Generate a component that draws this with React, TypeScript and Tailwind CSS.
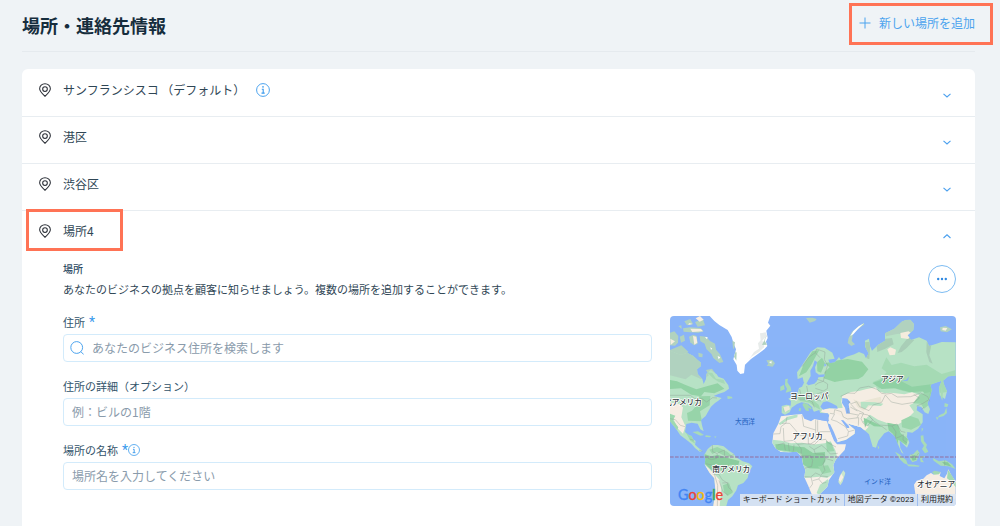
import type { ReactNode } from 'react'
import { clsx } from 'clsx'

const places = [
  { id: 'sf', name: 'サンフランシスコ （デフォルト）', isDefault: true },
  { id: 'minato', name: '港区' },
  { id: 'shibuya', name: '渋谷区' },
  { id: 'place4', name: '場所4', open: true },
]

function PinIcon() {
  return (
    <svg className="h-[14px] w-[14px] shrink-0" viewBox="0 0 12 12" fill="none" stroke="#2c3038" strokeWidth="0.9" aria-hidden="true">
      <path d="M6 11.4C4.1 9.4 1.4 7.4 1.4 5A4.6 4.4 0 0 1 10.6 5C10.6 7.4 7.9 9.4 6 11.4Z" />
      <circle cx="6" cy="5.2" r="2" />
    </svg>
  )
}

function InfoIcon({ className }: { className?: string }) {
  return (
    <svg className={clsx('shrink-0', className)} viewBox="0 0 14 14" fill="none" stroke="#3899ec" aria-hidden="true">
      <circle cx="7" cy="7" r="6.4" strokeWidth="0.9" />
      <path d="M5.8 6.2H7.2V10M5.5 10.1H8.7" strokeWidth="1.1" />
      <circle cx="7" cy="3.9" r="0.8" fill="#3899ec" stroke="none" />
    </svg>
  )
}

function Chevron({ up }: { up?: boolean }) {
  return (
    <svg className="mt-1 h-2 w-2 shrink-0" viewBox="0 0 8 8" fill="none" stroke="#4ba0ee" strokeWidth="1.1" aria-hidden="true">
      <path d={up ? 'M0.5 6L4 2.8L7.5 6' : 'M0.5 2.8L4 6L7.5 2.8'} />
    </svg>
  )
}

function Highlight({ className }: { className: string }) {
  return <span className={clsx('pointer-events-none absolute border-[3px] border-[#ff7355]', className)} />
}

type FieldProps = {
  id: string
  label: string
  placeholder: string
  required?: boolean
  info?: boolean
  icon?: ReactNode
}

function Field({ id, label, placeholder, required, info, icon }: FieldProps) {
  return (
    <div>
      <label htmlFor={id} className="flex h-4 items-center text-[11px] leading-4 text-[#32536a]">
        {label}
        {required && <span className="ml-1 font-[Roboto,sans-serif] text-sm leading-4 text-[#3899ec]">*</span>}
        {info && <InfoIcon className="h-3 w-3" />}
      </label>
      <div className="mt-1 flex h-7 items-center gap-2 rounded border border-[#d3ebfb] bg-white px-2">
        {icon}
        <input
          id={id}
          type="text"
          placeholder={placeholder}
          className="w-full min-w-0 bg-transparent text-xs text-[#162d3d] outline-none placeholder:text-[#8a9bab]"
        />
      </div>
    </div>
  )
}

// world map, drawn at 3x
const northAmerica =
  'M15 122L30 128L48 135L66 128L84 137L98 150L108 158L108 168L96 178L98 192L112 207L116 222L123 207L124 192L137 180L155 193L160 200L176 206L190 226L192 236L178 246L160 252L146 258L170 264L160 272L150 279L138 290L130 304L122 318L108 330L111 346L116 364L106 358L98 341L80 338L64 342L60 366L72 376L80 378L84 388L92 393L90 404L101 414L112 423L104 425L90 414L80 402L64 389L46 376L34 358L15 334Z'
const southAmerica =
  'M118 434L128 417L142 405L158 405L176 409L192 422L206 431L213 442L233 454L252 460L262 469L252 486L248 504L235 519L219 526L214 541L202 559L189 570L184 588L145 588L151 541L148 505L134 489L119 464L121 448Z'
const africa =
  'M348 319L378 315L411 312L418 326L438 334L448 327L486 334L491 352L507 392L516 403L543 403L539 420L512 449L505 465L508 487L492 510L487 530L461 556L442 557L429 526L418 502L421 480L414 462L411 442L396 425L371 427L347 426L331 414L322 399L325 370L340 341Z'
const eurasia =
  'M350 309L350 288L365 284L377 287L378 273L370 266L386 258L398 248L402 234L411 230L418 216L424 220L430 226L448 221L456 213L460 202L478 200L480 193L462 194L452 187L450 172L457 157L449 151L444 168L436 182L437 198L425 220L416 216L413 202L398 207L396 187L408 171L424 146L437 126L457 112L479 113L502 128L509 146L490 149L494 160L510 157L522 141L528 150L545 140L568 133L582 126L597 132L603 145L611 130L600 110L600 92L612 86L615 108L621 122L640 104L660 92L660 70L688 56L710 35L722 30L736 29L747 42L745 60L728 76L738 90L762 82L785 92L792 108L812 102L830 96L872 97L872 197L850 199L834 212L838 226L846 244L840 267L824 256L822 233L830 212L812 218L796 224L800 241L795 262L787 280L795 298L790 312L779 307L769 291L757 288L755 301L773 313L773 337L759 356L742 368L727 366L726 382L733 397L726 413L714 402L704 391L706 414L716 432L709 427L697 398L691 381L684 374L671 364L658 370L640 392L633 413L623 410L612 373L601 363L588 352L564 345L546 340L570 359L569 371L543 389L516 397L503 370L489 336L493 313L466 311L463 300L447 305L440 294L424 280L410 277L396 282L380 293L374 307L360 314Z'
const greenland =
  'M134 18L316 18L309 38L316 47L304 62L308 84L303 95L307 108L298 118L282 130L258 147L240 164L237 190L226 192L217 182L215 165L205 148L213 118L206 101L200 81L188 60L163 45L148 33Z'

function WorldMap() {
  return (
    <svg className="block h-[190px] w-full" viewBox="15 18 858 570" preserveAspectRatio="xMinYMin slice" role="img" aria-label="地図">
      <defs>
        <clipPath id="na"><path d={northAmerica} /></clipPath>
        <clipPath id="sa"><path d={southAmerica} /></clipPath>
        <clipPath id="af"><path d={africa} /></clipPath>
        <clipPath id="ea"><path d={eurasia} /></clipPath>
      </defs>
      <rect x="15" y="18" width="858" height="570" fill="#8ab4f8" />

      {/* arctic islands */}
      <g fill="#b1d2bf">
        <path d="M15 68L28 64L40 78L39 98L30 107L15 106Z" />
        <path d="M44 80L57 74L60 92L48 98Z" />
        <path d="M54 55L76 52L106 54L116 64L100 68L76 67L56 65Z" />
        <path d="M72 80L85 74L95 78L98 101L87 106L76 97Z" />
        <path d="M104 78L124 80L135 93L150 101L153 119L165 133L175 156L163 159L145 144L140 133L124 117L119 101L106 94Z" />
        <path d="M15 120L49 106L70 125L59 138L15 137Z" />
        <path d="M58 34L76 27L84 42L66 46ZM90 36L114 28L120 46L98 50ZM40 48L49 46L50 57ZM100 128L113 132L112 142L101 140ZM123 180L141 176L151 190L132 196Z" />
        <path d="M304 151L322 150L330 160L323 170L305 167L310 161Z" />
        <path d="M548 99L551 84L560 67L577 52L596 39L598 44L580 56L564 73L560 93L570 103L559 108Z" />
        <path d="M423 24L442 23L455 27L450 33L434 38ZM825 52L842 48L861 58L846 67L827 64Z" />
      </g>
      <g fill="#f6eee0">
        <path d="M76 56L108 57L114 64L82 66ZM84 78L94 80L97 98L88 104ZM16 86L30 94L17 105ZM92 25L105 18L116 29L104 35ZM72 39L83 42L70 45Z" />
        <path d="M833 53L847 54L842 62L832 60Z" />
      </g>
      <g fill="#fff">
        <path d={greenland} />
        <path d="M556 78L565 63L581 49L597 40L579 57L565 73Z" />
        <path d="M120 81L128 82L126 88ZM136 112L142 116L138 119ZM158 138L166 142L161 148ZM312 156L320 154L319 161Z" />
      </g>
      <path d="M285 70L302 67L307 79L292 91L298 111L282 126L259 140L251 150L267 126L282 116L279 100L287 91Z" fill="#e8eceb" />
      <path d="M202 92L210 97L207 118L215 128L214 152L207 140L212 124L204 114ZM305 76L299 92L306 104L291 105Z" fill="#b1d2bf" />

      {/* north america */}
      <path d={northAmerica} fill="#b7e2c5" />
      <g clipPath="url(#na)">
        <path d="M15 118H130V198L108 207L94 201L79 194L62 208L15 196Z" fill="#b1d2bf" />
        <path d="M15 210L36 214L60 224L94 238L120 230L158 220L178 236L148 250L118 246L108 259L79 254L48 235L15 237Z" fill="#92d2a5" />
        <path d="M102 259L136 258L134 286L105 304L111 334L69 332L66 309L81 302L95 286Z" fill="#98d4a9" />
        <path d="M15 278L37 280L54 292L49 322L61 348L54 371L39 356L25 326L15 324Z" fill="#f6eee3" />
        <path d="M15 311L31 317L24 331L40 352L34 366L15 339ZM61 365L80 378L91 401L76 392Z" fill="#9fd9b0" />
        <path d="M126 187L142 189L153 206L176 209L180 222L160 215L144 205Z" fill="#a7d9b8" />
      </g>
      <path d="M82 366L99 364L117 375L106 377ZM122 376L138 378L135 382L121 381ZM148 379L155 380L150 384ZM187 258L200 260L203 265L188 267Z" fill="#a9dcb7" />

      {/* south america */}
      <path d={southAmerica} fill="#b7e2c5" />
      <g clipPath="url(#sa)">
        <path d="M116 432L138 439L159 435L186 443L223 453L220 465L194 464L184 478L162 484L140 481L119 461Z" fill="#8bcd9f" />
        <path d="M133 419L157 411L187 425L202 439L175 436L155 425L142 432Z" fill="#9bd6ac" />
        <path d="M119 464L133 477L147 491L164 510L169 537L164 588H143L151 548L146 510L130 489Z" fill="#f6eee3" />
        <path d="M174 526L192 519L203 548L187 557L177 545Z" fill="#98d4a9" />
      </g>

      {/* africa */}
      <path d={africa} fill="#f6f0e8" />
      <g clipPath="url(#af)">
        <path d="M320 389L350 392L378 400L411 398L442 404L479 400L497 394L511 421L518 448L505 466L510 490L486 504L464 500L446 502L419 504L407 438L371 430L320 416Z" fill="#b7e2c5" />
        <path d="M331 403L354 402L386 409L418 412L444 429L480 426L481 454L467 476L432 475L413 463L410 431L370 424L333 419Z" fill="#8ed0a1" />
        <path d="M483 393L499 399L508 423L486 425ZM459 469L489 466L499 486L472 492Z" fill="#9bd6ac" />
        <path d="M465 524L488 508L496 518L464 558L455 548Z" fill="#b7e2c5" />
        <path d="M340 341L368 320L398 313L397 322L367 331L346 345Z" fill="#b7e2c5" />
      </g>
      <path d="M535 481L541 489L533 515L526 526L520 516L524 498Z" fill="#cbe7cb" />
      <path d="M529 491L535 502L526 517L521 509Z" fill="#f6eee3" />

      {/* europe and asia */}
      <path d={eurasia} fill="#b7e2c5" />
      <g clipPath="url(#ea)">
        <path d="M480 160L520 151L548 147L591 155L610 178L594 199L580 207L540 210L509 216L476 205L479 186L494 172Z" fill="#93d2a4" />
        <path d="M664 142L680 165L708 158L748 169L785 164L830 192L872 180V240L829 249L788 240L760 250L713 243L675 230L640 236L624 216L647 206L665 187L650 175Z" fill="#a5dab5" />
        <path d="M663 205L701 209L741 230L810 221L823 254L792 267L773 244L735 247L691 235L650 237L622 219Z" fill="#91d1a4" />
        <path d="M658 62L688 49L718 29L746 31L747 64L722 75L700 71L663 79Z" fill="#b1d2bf" />
        <path d="M600 97L616 95L613 148L605 145ZM635 107L661 86L681 84L686 103L659 117L637 126ZM708 109L730 82L748 90L725 114L710 126L698 129ZM785 96L800 100L793 136L803 161L793 156L784 127Z" fill="#a9ceb7" />
        <path d="M667 118L676 112L693 119L690 134L674 136ZM706 69L731 64L744 74L729 87L708 84Z" fill="#f5ecdd" />
        <path d="M532 257L558 246L582 243L602 238L632 232L640 244L660 250L678 248L718 253L741 247L765 256L759 273L733 286L747 306L724 329L697 344L668 340L639 329L615 314L593 335L611 350L600 362L546 344L519 331L509 315L468 306L472 298L505 295L533 294L529 275Z" fill="#f5eee3" />
        <path d="M489 312L511 309L532 322L550 337L601 347L594 363L570 355L572 376L544 392L515 398L489 344Z" fill="#f6f0e8" />
        <path d="M565 268L587 277L606 270L647 260L650 276L615 287L595 302L577 291Z" fill="#eae5d5" />
        <path d="M587 275L630 277L655 281L648 288L610 286L601 298L588 291Z" fill="#b7e2c5" />
        <path d="M596 323L609 329L631 339L654 350L627 349L608 337L600 353ZM667 338L699 344L707 370L729 387L724 406L700 389L697 409L684 372L671 361Z" fill="#8ed0a1" />
        <path d="M709 331L736 318L760 326L768 344L738 359L711 352ZM765 253L795 246L792 284L777 296L768 281L744 280Z" fill="#9bd6ac" />
        <path d="M442 124L463 120L448 147L439 164L424 187L402 199L415 165ZM456 157L471 143L480 160L468 188L457 184Z" fill="#95d3a7" />
        <path d="M401 252L432 257L442 269L461 284L466 299L452 292L434 278L404 272ZM353 290L371 291L370 303L356 305Z" fill="#a0d8b0" />
        <path d="M355 291L372 287L375 298L360 307Z" fill="#efe9d8" />
      </g>

      {/* inland seas */}
      <g fill="#8ab4f8">
        <path d="M466 290L474 277L486 274L499 279L516 288L518 296L493 294L474 299Z" />
        <path d="M532 264L547 266L556 276L551 283L555 310L544 311L540 293L531 279Z" />
        <path d="M490 343L495 342L507 367L518 394L512 397L501 376ZM528 330L535 331L551 347L553 354L545 354Z" />
        <path d="M442 307L464 309L489 310L488 319L492 334L470 331L450 326L435 330L421 324L414 309L395 308L408 295L421 292L433 301L427 279L442 292ZM377 307L388 295L399 289L399 308L380 313Z" />
        <path d="M478 160L485 165L478 170ZM709 214L724 209L733 199L728 212Z" />
      </g>
      <path d="M417 278L428 283L440 294L438 298L430 293L432 303L423 302L412 284ZM403 294L408 295L407 304L401 302Z" fill="#a3d9b2" />

      {/* islands */}
      <g fill="#a9dcb7">
        <path d="M361 207L369 206L367 217L377 232L379 243L362 248L366 236L360 225ZM346 230L357 224L359 238L346 243Z" />
        <path d="M829 230L834 247L832 272L827 260ZM839 279L850 283L847 291L838 290ZM844 292L846 309L836 318L817 323L824 315L838 309ZM813 320L820 324L816 331Z" />
        <path d="M770 354L775 356L770 366ZM767 377L775 376L777 393L786 404L783 412L790 425L780 430L771 417L777 407L768 394Z" />
        <path d="M690 425L703 433L724 451L729 465L717 460L704 447ZM725 463L748 464L764 467L761 470L730 469Z" />
        <path d="M734 435L745 432L757 419L764 429L755 452L742 457L735 447ZM765 439L781 438L770 447L777 457L767 456ZM803 444L822 454L842 451L861 463L872 477L850 469L827 467L806 452Z" />
        <path d="M638 405L643 413L639 418ZM720 378L726 377L725 384Z" />
      </g>
      <path d="M738 441L751 434L754 449L743 452ZM831 456L848 457L860 470L839 464Z" fill="#86ca9b" />

      {/* australia */}
      <path d="M747 524L755 512L775 506L785 496L798 489L806 494L811 485L827 487L824 498L838 505L846 491L850 478L859 496L872 515V565L846 580L822 551L792 561L765 570L751 552Z" fill="#f6eee3" />
      <path d="M801 487L808 482L827 486L822 493L808 494ZM849 479L861 497L872 516V532L861 517L846 505Z" fill="#a3d9b2" />

      {/* borders */}
      <g fill="none" stroke="#8b9992" strokeWidth="1.6" opacity="0.72">
        <path d="M15 256H76L89 266L111 266L125 276L143 263L156 264M15 326L31 329L46 346L60 350M74 387L86 391M102 420L112 424" />
        <path d="M142 405L143 425L157 431L155 445L139 449L129 445M158 429L178 420L179 439L195 438L207 434M123 461L143 466L149 480L143 492L162 493L171 509L187 519L191 533L204 545M148 492L158 526L157 588M162 511L173 544L190 556M172 519L190 518" />
        <path d="M351 340H374L406 377L430 374V402M366 320L363 339L348 350L345 371L325 372M411 315L416 349L452 360V329M458 331V365H495M452 360V392L437 402L418 401L398 403L386 391L357 394L355 354M338 405L357 399L361 421M370 399L373 424M387 404L385 424M398 402L409 417L408 438L437 437L443 451L440 469L418 475M433 409L447 419L470 406L482 416L496 432L518 430M447 419L451 432L476 432L481 447L474 462L480 481L467 496L452 489L437 501L418 500M483 446L504 452M438 501L443 522L433 535M443 512L461 507L472 520L484 517M461 507L468 498L489 500M430 401L448 404L461 391L482 388L490 399L513 411" />
        <path d="M478 200L475 214L460 219L450 226M457 208L475 214L488 222L487 236L475 243L451 235M404 238L408 256L397 265M425 228L429 249L450 254L470 247L491 254L487 267M398 267L428 268L442 276L448 292M430 250L433 268L456 270L468 273M411 170L431 142L451 128L455 117L480 126L478 149L488 165L480 191M451 128L465 143" />
        <path d="M495 310L507 312L509 299L529 305L535 321L548 327L581 323L580 347M509 312L499 329L515 334L541 350L551 365L569 360M550 365L548 378L519 386M527 259L548 249L570 250L584 234L611 229L638 239L650 250L665 252L679 250L697 261L737 260L767 249L788 260L794 274M548 274L559 281L575 275L584 290L612 302L624 285L650 277L661 255L679 276L711 283L748 277L763 264L746 253M558 283L572 298L596 309L588 326L594 339L607 348L623 329L609 315L584 310L576 323M611 315L626 333L644 345L681 348L696 342L708 364L721 367M650 349L665 360M681 348L693 366L691 385L705 380L715 374L714 390L725 398M556 291L577 303M550 294L548 309L579 315M755 288L772 281L790 270M769 298L777 292" />
        <path d="M739 434L752 442L761 429M839 451V467" />
      </g>
      <path d="M15 441H873" stroke="#936c9c" strokeWidth="3" strokeDasharray="11 4" />

      <g
        className="font-['Noto_Sans_CJK_JP',sans-serif] text-[23px] font-medium"
        fill="#30363a"
        stroke="#fff"
        strokeWidth="5"
        strokeLinejoin="round"
        paintOrder="stroke"
      >
        <text x="-3" y="284">北アメリカ</text>
        <text x="375" y="266">ヨーロッパ</text>
        <text x="648" y="215">アジア</text>
        <text x="382" y="386">アフリカ</text>
        <text x="142" y="485">南アメリカ</text>
        <text x="756" y="532">オセアニア</text>
      </g>
      <g className="font-['Noto_Sans_CJK_JP',sans-serif] text-[20px] font-medium" fill="#2d69c4">
        <text x="210" y="343">大西洋</text>
        <text x="598" y="522">インド洋</text>
      </g>
      <text
        x="39"
        y="571"
        className="font-[Lato,sans-serif] text-[43px] font-normal"
        strokeWidth="1"
      >
        <tspan fill="#4285f4" stroke="#4285f4">G</tspan>
        <tspan fill="#ea4335" stroke="#ea4335">o</tspan>
        <tspan fill="#fbbc04" stroke="#fbbc04">o</tspan>
        <tspan fill="#4285f4" stroke="#4285f4">g</tspan>
        <tspan fill="#34a853" stroke="#34a853">l</tspan>
        <tspan fill="#ea4335" stroke="#ea4335">e</tspan>
      </text>
    </svg>
  )
}

export default function App() {
  return (
    <div className="min-h-screen bg-[#eff3f6] pr-[25px] pl-[22px] font-['Noto_Sans_CJK_JP',sans-serif] text-[#2f4655]">
      <header className="flex h-[52px] items-center justify-between border-b border-[#e5eaee]">
        <h1 className="mb-0.5 text-lg font-bold text-[#162d3d]">場所・連絡先情報</h1>
        <button type="button" className="relative mb-1.5 flex items-center gap-2 text-xs text-[#4ba3ee]">
          <svg className="h-3 w-3" viewBox="0 0 12 12" fill="none" stroke="currentColor" aria-hidden="true">
            <path d="M6 0.5V11.5M0.5 6H11.5" />
          </svg>
          新しい場所を追加
          <Highlight className="-top-3 -right-[18px] -bottom-[14px] -left-[10px]" />
        </button>
      </header>

      <main className="mt-[17px] rounded-t-md bg-white">
        {places.map((place, i) => (
          <h2 key={place.id} className={clsx('h-[47px]', i > 0 && 'border-t border-[#e8edf1]')}>
            <button
              type="button"
              aria-expanded={Boolean(place.open)}
              className="relative flex h-full w-full items-center justify-between pr-6 pl-4 text-xs"
            >
              <span className="mb-1.5 flex items-center gap-[11px]">
                <PinIcon />
                {place.name}
                {place.isDefault && <InfoIcon className="h-[14px] w-[14px]" />}
              </span>
              <Chevron up={place.open} />
              {place.open && <Highlight className="-top-0.5 bottom-1.5 left-1 w-[97px]" />}
            </button>
          </h2>
        ))}

        <section className="pr-[19px] pb-10 pl-[41px]">
          <div className="flex items-start justify-between pt-1">
            <div>
              <h3 className="text-[10px] leading-4 font-medium text-[#2b4a63]">場所</h3>
              <p className="mt-1 text-[11px] leading-4">
                あなたのビジネスの拠点を顧客に知らせましょう。複数の場所を追加することができます。
              </p>
            </div>
            <button
              type="button"
              aria-label="その他のアクション"
              className="mt-1 flex h-7 w-7 items-center justify-center rounded-full border border-[#7dbcf2]"
            >
              <svg className="h-3 w-3" viewBox="0 0 12 12" fill="#3089e2" aria-hidden="true">
                <circle cx="2.2" cy="6" r="1.2" />
                <circle cx="6" cy="6" r="1.2" />
                <circle cx="9.8" cy="6" r="1.2" />
              </svg>
            </button>
          </div>

          <div className="mt-[17px] flex items-start gap-[18px]">
            <form className="flex min-w-0 flex-1 flex-col gap-4">
              <Field
                id="address"
                label="住所"
                required
                placeholder="あなたのビジネス住所を検索します"
                icon={
                  <svg className="-ml-0.5 h-[14px] w-[14px] shrink-0" viewBox="0 0 14 14" fill="none" stroke="#4ba3ee" aria-hidden="true">
                    <circle cx="6.7" cy="6.5" r="5.9" />
                    <path d="M10.8 10.6L13.7 13.5" />
                  </svg>
                }
              />
              <Field id="address-detail" label="住所の詳細（オプション）" placeholder="例：ビルの1階" />
              <Field id="place-name" label="場所の名称" required info placeholder="場所名を入力してください" />
            </form>

            <div className="relative mt-0.5 w-[286px] shrink-0 overflow-hidden rounded">
              <WorldMap />
              <div className="absolute right-0 bottom-0 flex h-3 items-center divide-x divide-[#9dbdf0] bg-[#dde5f1]/90 font-[Roboto,'Noto_Sans_CJK_JP',sans-serif] text-[8px] leading-3 text-[#1c1c1c]">
                <button type="button" className="px-[3px]">キーボード ショートカット</button>
                <span className="px-[3px]">地図データ ©2023</span>
                <a href="#terms" className="px-[3px]">利用規約</a>
              </div>
            </div>
          </div>
        </section>
      </main>
    </div>
  )
}
